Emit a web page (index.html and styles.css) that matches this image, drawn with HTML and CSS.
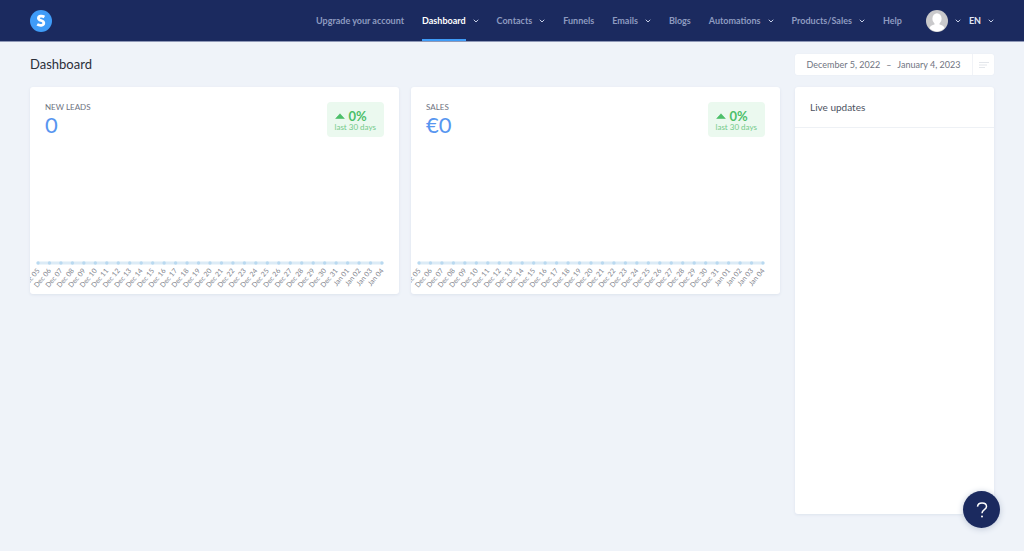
FILE: index.html
```html
<!DOCTYPE html>
<html lang="en">
<head>
<meta charset="utf-8">
<meta name="viewport" content="width=device-width, initial-scale=1">
<title>Dashboard</title>
<link rel="stylesheet" href="styles.css">
</head>
<body>
<svg class="defs" aria-hidden="true">
  <symbol id="chevron" viewBox="0 0 6 4"><path d="M1 1l2 2 2-2" fill="none" stroke="currentColor" stroke-width="1" stroke-linecap="round" stroke-linejoin="round"/></symbol>
</svg>

<header class="topbar">
  <a class="brand" href="#" aria-label="Home">
    <svg viewBox="0 0 22 22"><circle cx="11" cy="11" r="11" fill="#3f9cf8"/><path d="M14.400 7C12.600 5.900 8.500 5.600 8.400 8.200c0 2.800 5.500 1.900 5.400 4.800-.1 2.900-4.400 2.700-6.600 1.400" fill="none" stroke="#fff" stroke-width="2.800"/></svg>
  </a>
  <nav class="nav">
    <a class="nav-item" href="#">Upgrade your account</a>
    <a class="nav-item active" href="#"><span class="nav-label">Dashboard</span><svg class="chev"><use href="#chevron"/></svg></a>
    <a class="nav-item" href="#">Contacts<svg class="chev"><use href="#chevron"/></svg></a>
    <a class="nav-item" href="#">Funnels</a>
    <a class="nav-item" href="#">Emails<svg class="chev"><use href="#chevron"/></svg></a>
    <a class="nav-item" href="#">Blogs</a>
    <a class="nav-item" href="#">Automations<svg class="chev"><use href="#chevron"/></svg></a>
    <a class="nav-item" href="#">Products/Sales<svg class="chev"><use href="#chevron"/></svg></a>
    <a class="nav-item" href="#">Help</a>
  </nav>
  <div class="account">
    <button class="menu-button" type="button" aria-label="Account">
      <svg class="avatar" viewBox="0 0 22 22"><circle cx="11" cy="11" r="11" fill="#c9c9cb"/><ellipse cx="11" cy="8.700" rx="4.600" ry="5.500" fill="#fff"/><path d="M8.500 12h5v2.500c2.500.7 4.500 1.500 5 3.500A10.400 10.400 0 0 1 11 21.400 10.400 10.400 0 0 1 3.500 18c.5-2 2.500-2.800 5-3.500z" fill="#fff"/></svg>
      <svg class="chev"><use href="#chevron"/></svg>
    </button>
    <button class="menu-button" type="button">EN<svg class="chev"><use href="#chevron"/></svg></button>
  </div>
</header>

<main class="page">
  <div class="page-head">
    <h1 class="title">Dashboard</h1>
    <div class="range">
      <button class="range-dates" type="button"><span>December 5, 2022</span><span>–</span><span>January 4, 2023</span></button>
      <button class="range-filter" type="button" aria-label="Filter"><svg viewBox="0 0 10 8"><path d="M0 1.500h10M0 4h8M0 6.500h6" stroke="#e3e6eb" stroke-width="1"/></svg></button>
    </div>
  </div>

  <div class="columns">
    <div class="stats">
      <section class="card stat">
        <div class="stat-head">
          <div><h2 class="stat-name">NEW LEADS</h2><p class="stat-value">0</p></div>
          <div class="badge"><p class="badge-value"><svg class="arrow" viewBox="0 0 10 6"><path d="M5 .8L9.300 5.500H.7z" stroke="currentColor" stroke-width=".6" stroke-linejoin="round"/></svg>0%</p><p class="badge-note">last 30 days</p></div>
        </div>
        <svg class="chart" viewBox="0 0 369 38" role="img" aria-label="New leads per day"></svg>
      </section>
      <section class="card stat">
        <div class="stat-head">
          <div><h2 class="stat-name">SALES</h2><p class="stat-value">€0</p></div>
          <div class="badge"><p class="badge-value"><svg class="arrow" viewBox="0 0 10 6"><path d="M5 .8L9.300 5.500H.7z" stroke="currentColor" stroke-width=".6" stroke-linejoin="round"/></svg>0%</p><p class="badge-note">last 30 days</p></div>
        </div>
        <svg class="chart" viewBox="0 0 369 38" role="img" aria-label="Sales per day"></svg>
      </section>
    </div>
    <aside class="card updates"><h2 class="updates-title">Live updates</h2></aside>
  </div>
</main>

<button class="help" type="button" aria-label="Help"><svg viewBox="0 0 12 16"><path d="M1.500 4.600C1.700 2.400 3.500 1 6 1s4.500 1.400 4.500 3.600C10.500 7.800 6 7.600 6 11.200" fill="none" stroke="#fff" stroke-width="1.500"/><circle cx="6" cy="14.600" r="1" fill="#fff"/></svg></button>
<script src="charts.js"></script>
</body>
</html>
```
FILE: styles.css
```css
* { box-sizing: border-box; }
body {
  margin: 0;
  background: #eff3f9;
  color: #2b2f3a;
  font-family: Lato, "Open Sans", sans-serif;
  font-size: 9px;
}
h1, h2, p { margin: 0; font-weight: 400; }
button { border: 0; padding: 0; background: none; font: inherit; color: inherit; cursor: pointer; }
a { color: inherit; text-decoration: none; }
svg { display: block; }
.defs { position: absolute; width: 0; height: 0; }

.topbar {
  display: flex;
  align-items: center;
  height: 42px;
  padding: 0 30px;
  background: #1b2a5f;
  border-bottom: 1px solid #8f98b7;
  color: #8e9bc0;
  font-weight: 700;
}
.brand svg { width: 22px; height: 22px; }
.nav { display: flex; align-self: stretch; gap: 18px; margin-left: auto; }
.nav-item { display: flex; align-items: center; gap: 7px; white-space: nowrap; }
.nav-label { display: flex; align-items: center; align-self: stretch; box-shadow: inset 0 -2px #3f9cf8; }
.active { color: #fff; }
.chev { width: 6px; height: 4px; color: #c5cee6; }
.account { display: flex; align-items: center; gap: 8px; margin-left: 24px; color: #e2e7f5; }
.menu-button { display: flex; align-items: center; gap: 7px; }
.avatar { width: 22px; height: 22px; }

.page { padding: 12px 30px 36px; }
.page-head { display: flex; align-items: center; justify-content: space-between; margin-bottom: 12px; }
.title { font-size: 13px; line-height: 21px; }
.range { display: flex; width: 199px; height: 21px; background: #fff; border-radius: 2px; color: #70747f; box-shadow: 0 0 1px #d9dfea; }
.range-dates { display: flex; flex: 1; align-items: center; justify-content: center; gap: 6px; white-space: nowrap; }
.range-filter { display: flex; align-items: center; justify-content: center; width: 22px; border-left: 1px solid #f1f3f7; }
.range-filter svg { width: 10px; height: 8px; }

.columns { display: grid; grid-template-columns: 1fr 199px; gap: 15px; }
.stats { display: grid; grid-template-columns: 1fr 1fr; align-items: start; gap: 12px; }
.card { background: #fff; border-radius: 3px; box-shadow: 0 1px 3px #dde3ed; }
.stat { display: flex; flex-direction: column; justify-content: space-between; min-height: 207px; overflow: hidden; }
.stat-head { display: flex; justify-content: space-between; align-items: flex-start; padding: 15px 15px 0; }
.stat-name { font-size: 8px; line-height: 10px; color: #6d7280; }
.stat-value { font-size: 22px; line-height: 25px; color: #5896f0; }
.badge { padding: 7px 8px 6px; border-radius: 4px; background: #ebf9ef; color: #4dbf6a; }
.badge-value { display: flex; align-items: center; gap: 4px; font-size: 13px; font-weight: 700; line-height: 14px; }
.arrow { width: 10px; height: 6px; fill: currentColor; }
.badge-note { font-size: 8px; line-height: 8px; color: #74ca89; }
.chart { width: 100%; }
.chart-line { stroke: #dcebf6; stroke-width: 3; }
.chart-dot { fill: #b9d9f0; }
.chart-label { font-size: 7px; fill: #80838c; text-anchor: end; }

.updates { min-height: calc(100vh - 124px); }
.updates-title { padding: 15px 15px 14px; border-bottom: 1px solid #eef1f5; font-size: 10px; line-height: 11px; color: #4d5261; }

.help {
  position: fixed;
  right: 24px;
  bottom: 23px;
  display: flex;
  align-items: center;
  justify-content: center;
  width: 37px;
  height: 37px;
  border-radius: 50%;
  background: #1b2a5f;
  box-shadow: 0 1px 6px #bcc5d6;
}
.help svg { width: 12px; height: 16px; }
```
FILE: charts.js
```js
const NS = "http://www.w3.org/2000/svg";
const START = new Date(2022, 11, 5);
const DAYS = 31;
const LEFT = 8;
const RIGHT = 352;
const BASE = 7;

function add(parent, name, attrs) {
  const node = document.createElementNS(NS, name);
  for (const key in attrs) node.setAttribute(key, attrs[key]);
  parent.appendChild(node);
  return node;
}

document.querySelectorAll(".chart").forEach((chart) => {
  add(chart, "line", { class: "chart-line", x1: LEFT, x2: RIGHT, y1: BASE, y2: BASE });
  for (let i = 0; i < DAYS; i++) {
    const x = LEFT + (i * (RIGHT - LEFT)) / (DAYS - 1);
    const day = new Date(START.getFullYear(), START.getMonth(), START.getDate() + i);
    const month = day.getMonth() === 0 ? "Jan" : "Dec";
    add(chart, "circle", { class: "chart-dot", cx: x, cy: BASE, r: 1.7 });
    const label = add(chart, "text", { class: "chart-label", transform: `translate(${x + 2} 15) rotate(-50)` });
    label.textContent = `${month} ${String(day.getDate()).padStart(2, "0")}`;
  }
});
```
